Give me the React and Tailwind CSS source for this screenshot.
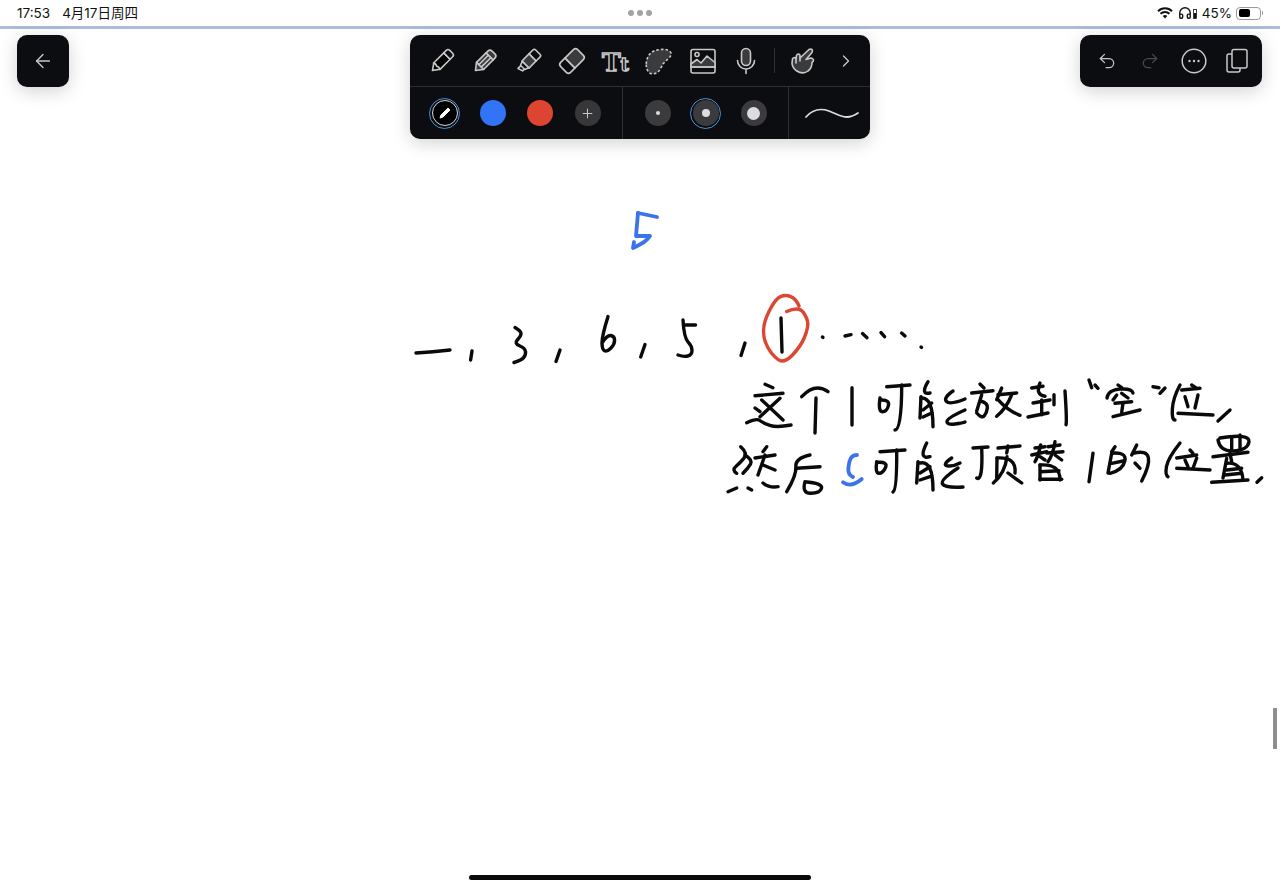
import React from "react";
import { Undo2, Redo2, ChevronRight, ArrowLeft, Plus, Headphones } from "lucide-react";

const BLACK = [
  [[416,353],[433,352],[450,350]],
  [[472,351],[470.6,360]],
  [[515,327.5],[521,331],[521,336],[514,343.5],[525,348],[526,355],[521,360.5],[514,362.5]],
  [[560,350],[556,361.5]],
  [[608,316.6],[602,336],[602,349.6],[607,352],[614.6,344.5],[614.6,336],[607,335],[602,343]],
  [[645,344.5],[640.7,357]],
  [[683,320],[684,337.7],[692,346],[692,355],[683.6,357],[678,355]],
  [[683.6,325],[695.5,325]],
  [[745,343],[741,355.4]],
  [[781,318],[782,352]],
  [[822.4,337],[823,337.4]],
  [[845,336],[851,334.7]],
  [[862.5,333.6],[867,337.7]],
  [[881,332.6],[884.6,336.7]],
  [[901.6,333],[905,336]],
  [[921,347],[921.5,347.4]],
  // 这
  [[765,384.3],[773,387.7]],
  [[755,395.7],[783,393.3]],
  [[761.7,400],[783,420]],
  [[780,398.3],[760,416.7]],
  [[755,408],[760,411.7]],
  [[746.7,422.7],[756.7,418],[763,423],[776.7,427.7],[791,425]],
  // 个
  [[801.7,396.7],[815,382.3],[828,391.7]],
  [[816,398],[815,433]],
  // 1
  [[852,387.7],[852,425]],
  // 可
  [[886.7,386.7],[910,385]],
  [[901.7,385],[901.7,430],[895,430]],
  [[880,398],[878,411.7],[886.7,411.7],[890,400],[881.7,400]],
  // 能
  [[928,381.7],[920,395],[930,393]],
  [[921,396.7],[920,418]],
  [[921,398],[933,396.7],[933,426.7]],
  [[923,410],[931.7,403]],
  [[923,417],[931.7,413]],
  [[953,391],[943,398],[950,405],[965,399]],
  [[965,410],[947,418],[947,425],[963,423],[965,422]],
  // 放
  [[980,384],[984,388]],
  [[971.7,393],[993,390.7]],
  [[981.7,394.7],[976.7,411]],
  [[980.7,401],[988,403],[986.7,413],[981.7,418.7],[976.7,413]],
  [[1001.7,388],[996.7,399.7]],
  [[998,394.7],[1016.7,393]],
  [[1011.7,394.7],[1006.7,408],[996.7,416.3]],
  [[998,399.7],[1008,411],[1020,415.3]],
  // 到
  [[1031.7,388],[1043,386.3]],
  [[1040,383],[1035,394.7],[1045,396.3]],
  [[1033,403],[1050,400]],
  [[1041.7,400],[1041.7,414.7]],
  [[1028,417],[1048,413]],
  [[1054,394.7],[1054,404.7]],
  [[1065,391],[1067,421],[1066,424.7]],
  // “空”
  [[1089,380],[1091.7,387.7]],
  [[1095,385],[1098,388.3]],
  [[1107,398],[1108,390],[1131.7,388.3],[1133,393]],
  [[1118,385],[1121.7,387.7]],
  [[1116.7,395],[1113,400]],
  [[1121.7,393.3],[1128,398]],
  [[1115,403.3],[1131.7,401.7]],
  [[1123,403],[1121.7,412.3]],
  [[1113,416.7],[1140,410]],
  [[1153,386.7],[1159,387.7]],
  [[1165,388],[1160,393.3]],
  // 位
  [[1180,385],[1173,398],[1171.7,420],[1175,420]],
  [[1191.7,385],[1196.7,388.3]],
  [[1181.7,390],[1200,388.3]],
  [[1185,396.7],[1188,406.7]],
  [[1198,395],[1195,408]],
  [[1178,413.3],[1213,415]],
  [[1230,410],[1218,421]],
  // 然
  [[740.7,446.7],[748,453.3],[740,463],[731.7,470],[736.7,473.3]],
  [[745,455],[753,460],[748,468.3],[743,473.3]],
  [[766.7,446.7],[763,451.7]],
  [[755,458],[775,455]],
  [[765,455],[758,475]],
  [[763,465],[775,470]],
  [[728,491.7],[736.7,488]],
  [[748,488],[751.7,490]],
  [[763,483],[770,488.3],[778,486.7]],
  // 后
  [[810,455],[795,458.3],[796.7,475],[786.7,491.7]],
  [[796.7,468.3],[820,466.7]],
  [[805,481.7],[801.7,493.3],[820,493.3],[823,483.3],[805,481.7]],
  // 可
  [[880,451.7],[905,450]],
  [[896.7,450],[897,490],[893,492]],
  [[876.7,461.7],[875,473.3],[883,473.3],[888,461.7],[878,462.3]],
  // 能
  [[926.7,443],[918,460],[930,456.7]],
  [[918,461.7],[916.7,483]],
  [[920,463],[933,460],[933,490]],
  [[920,473],[930,466.7]],
  [[920,480],[930,476.7]],
  [[951.7,458],[941.7,465],[953,466.7],[960,463]],
  [[958,468],[940,480],[945,488],[963,487]],
  // 顶
  [[973,448],[988,447]],
  [[981.7,448],[983,481.7],[976.7,478]],
  [[998,448],[1020,446]],
  [[1008,446],[1006.7,453]],
  [[997,458],[996.7,478]],
  [[997,458],[1016.7,456.7],[1015,473]],
  [[1007,456.7],[1005,473],[993.3,483]],
  [[1008,473],[1021.7,483]],
  // 替
  [[1031.7,455],[1046.7,451.7]],
  [[1035,448],[1045,446.7]],
  [[1040.7,445],[1038,456.7],[1035,461.7]],
  [[1040,456.7],[1045,460]],
  [[1048,446.7],[1060,445]],
  [[1047,453],[1063,451.7]],
  [[1055,441.7],[1053,455],[1048,461.7]],
  [[1055,455],[1061.7,460]],
  [[1040,465],[1040,480]],
  [[1040,465],[1060,463.3],[1060,480]],
  [[1040.7,471.7],[1059,470.7]],
  [[1040,479.3],[1061.7,479.3]],
  // 1 的
  [[1093,453.3],[1089,481.7]],
  [[1115,446.7],[1111.7,451.7]],
  [[1111.7,453.3],[1108,473]],
  [[1111.7,453.3],[1126.7,451.7],[1123,470],[1110,473.3]],
  [[1111.7,463.3],[1123,461]],
  [[1136.7,445],[1131.7,455]],
  [[1133,453.3],[1146.7,450],[1150,465],[1141.7,481]],
  [[1135,463],[1140,468.3]],
  // 位
  [[1180,443],[1168,458],[1165,475],[1168,476.7]],
  [[1190,450],[1193,453.3]],
  [[1176.7,458],[1196.7,455]],
  [[1185,460],[1188,466.7]],
  [[1196.7,458],[1193,468.3]],
  [[1176.7,468.3],[1210,470]],
  // 置
  [[1218,440],[1220,451.7],[1248,450],[1250,433.3],[1220,438]],
  [[1231.7,436.7],[1231.7,450]],
  [[1240,435],[1240,450]],
  [[1213,456.7],[1248,452.3]],
  [[1230,453.3],[1231.7,461.7]],
  [[1226.7,458.3],[1223,478]],
  [[1226.7,463.3],[1241.7,461.7],[1243,480]],
  [[1226.7,470],[1241.7,468.3]],
  [[1225,475],[1241.7,473.3]],
  [[1211.7,482.3],[1248,480]],
  [[1261.7,477.7],[1257,482.3]],
];

const BLUE = [
  [[638,213],[657,217]],
  [[638,213],[638,213],[636,236],[636,236],[650,236],[650,236],[645,242],[633,248],[633,248],[634,242]],
  [[857,455],[851,455],[848,468],[849,475],[853,477]],
  [[861.7,479],[851,488.3],[843,482.3]],
];

const RED = [
  [[786.7,311.5],[799,306],[807.8,319],[807.8,329],[801,346],[784,364],[772,355],[763.5,339.4],[763.5,322.4],[775.4,298.6],[785.6,294.5],[796,298.6],[799,306]],
];

// A stroke through its points, rounded off the way a stylus line is.
function toPath(p) {
  if (p.length < 3) return `M${p[0][0]} ${p[0][1]}L${p[1][0]} ${p[1][1]}`;
  let d = `M${p[0][0]} ${p[0][1]}`;
  for (let i = 1; i < p.length - 1; i++) {
    const nx = i === p.length - 2 ? p[i + 1][0] : (p[i][0] + p[i + 1][0]) / 2;
    const ny = i === p.length - 2 ? p[i + 1][1] : (p[i][1] + p[i + 1][1]) / 2;
    d += `Q${p[i][0]} ${p[i][1]} ${nx} ${ny}`;
  }
  return d;
}

function Ink() {
  return (
    <svg className="absolute inset-0" width="1280" height="889" viewBox="0 0 1280 889" fill="none" strokeLinecap="round" strokeLinejoin="round" aria-label="这个1可能放到“空”位,然后5可能顶替1的位置,">
      {BLACK.map((s, i) => <path key={i} d={toPath(s)} stroke="#0a0a0a" strokeWidth="3.4" />)}
      {BLUE.map((s, i) => <path key={i} d={toPath(s)} stroke="#3a74ea" strokeWidth="3.8" />)}
      {RED.map((s, i) => <path key={i} d={toPath(s)} stroke="#dc4632" strokeWidth="3.4" />)}
    </svg>
  );
}

const S = "#c8c8c8";
const F = "#3b3b3e";

function Tool({ children }) {
  return <div className="flex h-full w-[43.5px] shrink-0 items-center justify-center">{children}</div>;
}

function Svg({ children }) {
  return <svg width="30" height="30" viewBox="0 0 30 30" fill="none" stroke={S} strokeWidth="1.6" strokeLinejoin="round" strokeLinecap="round">{children}</svg>;
}

const PencilIcon = () => (
  <Svg>
    <g transform="rotate(45 15 15)">
      <path d="M10.5 8V22L15 28.5 19.5 22V8Z" fill="#000" />
      <path d="M10.5 8V4.5a2.5 2.5 0 0 1 2.5-2.5h4a2.5 2.5 0 0 1 2.5 2.5V8Z" fill="#0c0d10" />
      <path d="M10.5 22.5q2.3-1.5 4.5 0q2.3-1.5 4.5 0" />
    </g>
  </Svg>
);
const PenIcon = () => (
  <Svg>
    <g transform="rotate(45 15 15)">
      <path d="M10 6V22L15 28.5 20 22V6a3 3 0 0 0-3-3h-4a3 3 0 0 0-3 3Z" fill={F} />
      <path d="M10 8.5H20M13.3 9V22M16.7 9V22M10 22H20" />
    </g>
  </Svg>
);
const HighlighterIcon = () => (
  <Svg>
    <g transform="rotate(45 15 15)">
      <path d="M10 4.5a2 2 0 0 1 2-2h6a2 2 0 0 1 2 2V10H10Z" fill="#0c0d10" />
      <path d="M10 10H20V20H10Z" fill={F} />
      <path d="M10.5 20 12 24H18L19.5 20ZM12.5 24V28L17.5 26.5V24" fill="#0c0d10" />
    </g>
  </Svg>
);
const EraserIcon = () => (
  <Svg>
    <g transform="rotate(45 15 15)">
      <path d="M8 6a3 3 0 0 1 3-3h8a3 3 0 0 1 3 3V18H8Z" fill={F} />
      <path d="M8 18H22V24a3 3 0 0 1-3 3h-8a3 3 0 0 1-3-3Z" fill="#0c0d10" />
    </g>
  </Svg>
);
const TtIcon = () => (
  <svg className="opacity-[0.99]" width="30" height="30" viewBox="0 0 30 30">
    <text x="1" y="25" fontFamily="'DejaVu Serif',serif" fontWeight="700" fontSize="25" fill="#0c0d10" stroke={S} strokeWidth="1.4">
      T<tspan fontSize="18">t</tspan>
    </text>
  </svg>
);
const LassoIcon = () => (
  <Svg>
    <path d="M2.3 18C2.5 12 5 7 10 5C15 3 25 2 27 7C28 11 22 14 19 18C17 21 16 27 9 28C5 28 2 24 2.3 18Z" fill={F} strokeDasharray="2.6 2" strokeLinecap="butt" />
  </Svg>
);
const ImageIcon = () => (
  <Svg>
    <rect x="3" y="3.5" width="24" height="23.5" rx="2" fill="#0c0d10" />
    <path d="M3 18 9 13.5 13 17 19 10 27 16.5V21H3Z" fill={F} />
    <circle cx="9" cy="8.5" r="2" />
    <path d="M3 21H27" />
  </Svg>
);
const MicIcon = () => (
  <Svg>
    <rect x="10.5" y="2.5" width="9" height="17" rx="4.5" fill={F} />
    <path d="M6.5 14.5a8.5 8.5 0 0 0 17 0M15 23V27.5" />
  </Svg>
);
const HandIcon = () => (
  <Svg>
    <path d="M8 24.5C5 22 4 20 4 17L4.5 13Q5 11.5 6.5 11.5Q8 11.5 8 13L8.5 9.5Q9 8 10.5 8Q12 8 12 10L12 12L21 3.5Q22.5 2.5 24 3.5Q25 5 24 6.5L18 13.5L23 12Q25 12 25.5 14Q25.5 15.5 24 16.5Q24 22 20 25Q15 29 8 24.5Z" fill={F} />
    <path d="M8 13V17M12 12V15" />
  </Svg>
);

function Swatch({ className, children }) {
  return <div className={`flex size-[26px] items-center justify-center rounded-full ${className}`}>{children}</div>;
}

function Ringed({ children, on }) {
  return (
    <div className={`flex size-[31px] items-center justify-center rounded-full ${on ? "border border-[#4f8fdc]" : ""}`}>{children}</div>
  );
}

function SizeDot({ className, on }) {
  return (
    <div className="flex w-[48px] shrink-0 items-center justify-center">
      <Ringed on={on}>
        <div className="flex size-[26px] items-center justify-center rounded-full bg-[#3b3b3e]">
          <div className={`rounded-full bg-[#dcdce0] ${className}`} />
        </div>
      </Ringed>
    </div>
  );
}

function ColorCell({ children }) {
  return <div className="flex w-[47.7px] shrink-0 items-center justify-center">{children}</div>;
}

const PANEL = "rounded-[10px] bg-[#0c0d10] shadow-[0_4px_18px_rgba(0,0,0,0.18)]";

function StatusBar() {
  return (
    <div className="relative flex h-[26px] items-center justify-between pl-[17px] pr-[17px] font-['Inter','Noto_Sans_CJK_SC',sans-serif] text-[13.5px] text-[#111]">
      <div className="flex items-center gap-[12px]">
        <span>17:53</span>
        <span>4月17日周四</span>
      </div>
      <div className="absolute left-[628px] top-[10px] flex gap-[3px]">
        <div className="size-[6px] rounded-full bg-[#a3a3a3]" />
        <div className="size-[6px] rounded-full bg-[#a3a3a3]" />
        <div className="size-[6px] rounded-full bg-[#a3a3a3]" />
      </div>
      <div className="flex items-center">
        <svg width="16" height="12" viewBox="0 0 16 12" fill="none" stroke="#111" strokeWidth="2">
          <path d="M1 4.2a10 10 0 0 1 14 0M3.5 6.8a6.5 6.5 0 0 1 9 0" />
          <path d="M8 11.5 5.7 9a3.3 3.3 0 0 1 4.6 0Z" fill="#111" stroke="none" />
        </svg>
        <Headphones className="ml-[5px]" size={14} color="#111" strokeWidth={2.4} />
        <svg className="ml-[1px]" width="4" height="11" viewBox="0 0 4 11"><rect x="0.5" y="1.5" width="3" height="9" fill="none" stroke="#111" strokeWidth="0.8" /><rect x="1" y="5" width="2" height="5" fill="#111" /></svg>
        <span className="ml-[5px]">45%</span>
        <div className="ml-[4px] flex items-center">
          <div className="h-[13px] w-[25px] rounded-[4px] border border-[#9a9a9a] p-[1.5px]">
            <div className="h-full w-[11px] rounded-[2px] bg-black" />
          </div>
          <div className="ml-[1px] h-[4px] w-[1px] rounded-r bg-[#9a9a9a]" />
        </div>
      </div>
    </div>
  );
}

export default function App() {
  return (
    <div className="relative h-[889px] w-[1280px] overflow-hidden bg-white">
      <Ink />
      <StatusBar />
      <div className="h-[3px] bg-[#a9bcd9]" />

      <div className="relative mt-[6px] flex items-start pl-[17px] pr-[18px]">
        <div className={`flex size-[52px] items-center justify-center ${PANEL}`}>
          <ArrowLeft size={22} color="#c8c8c8" strokeWidth={1.5} />
        </div>

        <div className={`ml-[341px] h-[104px] w-[460px] ${PANEL}`}>
          <div className="flex h-[52px] items-center border-b border-[#2f3033] pl-[10px]">
            <Tool><PencilIcon /></Tool>
            <Tool><PenIcon /></Tool>
            <Tool><HighlighterIcon /></Tool>
            <Tool><EraserIcon /></Tool>
            <Tool><TtIcon /></Tool>
            <Tool><LassoIcon /></Tool>
            <Tool><ImageIcon /></Tool>
            <Tool><MicIcon /></Tool>
            <div className="flex w-[13px] shrink-0 justify-center">
              <div className="h-[25px] w-px bg-[#2f3033]" />
            </div>
            <Tool><HandIcon /></Tool>
            <Tool><ChevronRight size={20} color="#c8c8c8" strokeWidth={1.6} /></Tool>
          </div>
          <div className="flex h-[52px]">
            <div className="flex w-[213px] shrink-0 items-center border-r border-[#2f3033] pl-[11px]">
              <ColorCell>
                <Ringed on>
                  <div className="flex size-[26px] items-center justify-center rounded-full border border-[#d8d8d8] bg-black">
                    <svg width="16" height="16" viewBox="0 0 16 16"><path d="M3 13 4 10 11 3 13 5 6 12Z" fill="#fff" stroke="#fff" strokeLinejoin="round" /></svg>
                  </div>
                </Ringed>
              </ColorCell>
              <ColorCell><Swatch className="bg-[#3174f5]" /></ColorCell>
              <ColorCell><Swatch className="bg-[#dd4530]" /></ColorCell>
              <ColorCell>
                <Swatch className="bg-[#37373a]"><Plus size={15} color="#c8c8c8" strokeWidth={1.6} /></Swatch>
              </ColorCell>
            </div>
            <div className="flex w-[166px] shrink-0 items-center justify-center border-r border-[#2f3033]">
              <SizeDot className="size-[4px]" />
              <SizeDot className="size-[8px]" on />
              <SizeDot className="size-[13px]" />
            </div>
            <div className="flex flex-1 items-center justify-center pl-[4px]">
              <svg width="54" height="16" viewBox="0 0 54 16" fill="none" stroke="#dcdce0" strokeWidth="1.8" strokeLinecap="round">
                <path d="M1 12C8 4 15 3 24 6c8 3 12 6 18 6 5 0 8-2 11-4" />
              </svg>
            </div>
          </div>
        </div>

        <div className={`ml-auto flex h-[52px] w-[182px] items-center pl-[5px] ${PANEL}`}>
          <Tool><Undo2 size={20} color="#c8c8c8" strokeWidth={1.5} /></Tool>
          <Tool><Redo2 size={20} color="#4a4a4d" strokeWidth={1.5} /></Tool>
          <Tool>
            <svg width="26" height="26" viewBox="0 0 26 26" fill="none" stroke="#c8c8c8" strokeWidth="1.5">
              <circle cx="13" cy="13" r="11.8" />
              <circle cx="8.5" cy="13" r="1.2" fill="#c8c8c8" stroke="none" />
              <circle cx="13" cy="13" r="1.2" fill="#c8c8c8" stroke="none" />
              <circle cx="17.5" cy="13" r="1.2" fill="#c8c8c8" stroke="none" />
            </svg>
          </Tool>
          <Tool>
            <svg width="24" height="26" viewBox="0 0 24 26" fill="none" stroke="#c8c8c8" strokeWidth="1.5" strokeLinejoin="round">
              <path d="M7 6H4a2 2 0 0 0-2 2V22a2 2 0 0 0 2 2H13a2 2 0 0 0 2-2V20" />
              <rect x="7" y="1.5" width="15" height="18.5" rx="2" fill="#0c0d10" />
            </svg>
          </Tool>
        </div>
      </div>

      <div className="absolute right-[3px] top-[708px] h-[41px] w-[4px] bg-[#8e8e8e]" />
      <div className="absolute bottom-[9px] left-[469px] h-[5px] w-[342px] rounded-full bg-[#0a0a0a]" />
    </div>
  );
}
